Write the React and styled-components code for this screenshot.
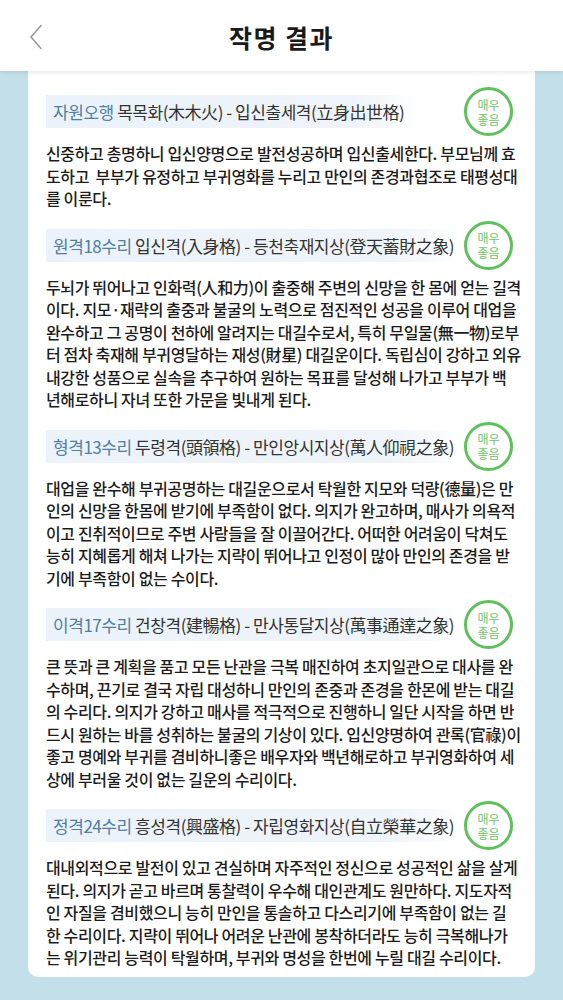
import React from 'react'
import styled, { createGlobalStyle } from 'styled-components'

const GlobalStyle = createGlobalStyle`
  html, body {
    margin: 0;
    padding: 0;
    background: #c3dfea;
  }
  body {
    font-family: 'Noto Sans CJK KR', 'Noto Sans', sans-serif;
  }
`

const sections = [
  {
    label: '자원오행',
    title: '목목화(木木火) - 입신출세격(立身出世格)',
    lines: [
      '신중하고 총명하니 입신양명으로 발전성공하며 입신출세한다. 부모님께 효',
      '도하고  부부가 유정하고 부귀영화를 누리고 만인의 존경과협조로 태평성대',
      '를 이룬다.',
    ],
  },
  {
    label: '원격18수리',
    title: '입신격(入身格) - 등천축재지상(登天蓄財之象)',
    lines: [
      '두뇌가 뛰어나고 인화력(人和力)이 출중해 주변의 신망을 한 몸에 얻는 길격',
      '이다. 지모·재략의 출중과 불굴의 노력으로 점진적인 성공을 이루어 대업을',
      '완수하고 그 공명이 천하에 알려지는 대길수로서, 특히 무일물(無一物)로부',
      '터 점차 축재해 부귀영달하는 재성(財星) 대길운이다. 독립심이 강하고 외유',
      '내강한 성품으로 실속을 추구하여 원하는 목표를 달성해 나가고 부부가 백',
      '년해로하니 자녀 또한 가문을 빛내게 된다.',
    ],
  },
  {
    label: '형격13수리',
    title: '두령격(頭領格) - 만인앙시지상(萬人仰視之象)',
    lines: [
      '대업을 완수해 부귀공명하는 대길운으로서 탁월한 지모와 덕량(德量)은 만',
      '인의 신망을 한몸에 받기에 부족함이 없다. 의지가 완고하며, 매사가 의욕적',
      '이고 진취적이므로 주변 사람들을 잘 이끌어간다. 어떠한 어려움이 닥쳐도',
      '능히 지혜롭게 해쳐 나가는 지략이 뛰어나고 인정이 많아 만인의 존경을 받',
      '기에 부족함이 없는 수이다.',
    ],
  },
  {
    label: '이격17수리',
    title: '건창격(建暢格) - 만사통달지상(萬事通達之象)',
    lines: [
      '큰 뜻과 큰 계획을 품고 모든 난관을 극복 매진하여 초지일관으로 대사를 완',
      '수하며, 끈기로 결국 자립 대성하니 만인의 존중과 존경을 한몬에 받는 대길',
      '의 수리다. 의지가 강하고 매사를 적극적으로 진행하니 일단 시작을 하면 반',
      '드시 원하는 바를 성취하는 불굴의 기상이 있다. 입신양명하여 관록(官祿)이',
      '좋고 명예와 부귀를 겸비하니좋은 배우자와 백년해로하고 부귀영화하여 세',
      '상에 부러울 것이 없는 길운의 수리이다.',
    ],
  },
  {
    label: '정격24수리',
    title: '흥성격(興盛格) - 자립영화지상(自立榮華之象)',
    lines: [
      '대내외적으로 발전이 있고 견실하며 자주적인 정신으로 성공적인 삶을 살게',
      '된다. 의지가 곧고 바르며 통찰력이 우수해 대인관계도 원만하다. 지도자적',
      '인 자질을 겸비했으니 능히 만인을 통솔하고 다스리기에 부족함이 없는 길',
      '한 수리이다. 지략이 뛰어나 어려운 난관에 봉착하더라도 능히 극복해나가',
      '는 위기관리 능력이 탁월하며, 부귀와 명성을 한번에 누릴 대길 수리이다.',
    ],
  },
]

export default function App() {
  return (
    <>
      <GlobalStyle />
      <Page>
        <Header>
          <BackButton aria-label="뒤로">
            <svg width="14" height="26" viewBox="0 0 14 26">
              <polyline
                points="12,1.5 2,13 12,24.5"
                fill="none"
                stroke="#9a9a9a"
                strokeWidth="1.6"
                strokeLinejoin="round"
                strokeLinecap="round"
              />
            </svg>
          </BackButton>
          <HeaderTitle>작명 결과</HeaderTitle>
        </Header>
        <Card>
          {sections.map((s) => (
            <Section key={s.label}>
              <TitleRow>
                <Title>
                  <Label>{s.label}</Label> {s.title}
                </Title>
                <Badge>
                  <BadgeText>매우</BadgeText>
                  <BadgeText>좋음</BadgeText>
                </Badge>
              </TitleRow>
              <Body>
                {s.lines.map((line, i) => (
                  <Line key={i}>{line}</Line>
                ))}
              </Body>
            </Section>
          ))}
        </Card>
      </Page>
    </>
  )
}

const Page = styled.div`
  min-height: 1000px;
  background: #c3dfea;
`

const Header = styled.header`
  position: relative;
  z-index: 2;
  height: 71px;
  background: #fff;
  display: flex;
  align-items: center;
  justify-content: center;
  box-shadow: 0 2px 4px rgba(0, 0, 0, 0.08);
`

const BackButton = styled.button`
  position: absolute;
  left: 29px;
  top: 24px;
  border: none;
  background: none;
  padding: 0;
  display: flex;
`

const HeaderTitle = styled.h1`
  margin: 0;
  font-size: 25px;
  font-weight: 700;
  color: #1a1a1a;
  letter-spacing: 1.5px;
  padding-top: 2px;
`

const Card = styled.main`
  margin: 0 28px;
  background: #fff;
  border-radius: 0 0 10px 10px;
  padding: 24px 18px 8px 18px;
  display: flex;
  flex-direction: column;
  gap: 19px;
`

const Section = styled.section`
  display: flex;
  flex-direction: column;
`

const TitleRow = styled.div`
  display: flex;
  align-items: center;
  height: 33px;
`

const Title = styled.h2`
  margin: 0;
  flex: 0 1 auto;
  min-width: 0;
  font-size: 17px;
  font-weight: 400;
  color: #333;
  letter-spacing: -0.45px;
  line-height: 33px;
  height: 33px;
  padding: 0 18px 0 7px;
  white-space: nowrap;
  background: linear-gradient(
    90deg,
    #ebf2f9 0%,
    #eef4f9 82%,
    rgba(238, 244, 249, 0) 100%
  );
`

const Label = styled.span`
  color: #4f7fa2;
`

const Badge = styled.div`
  flex: 0 0 auto;
  box-sizing: border-box;
  width: 49px;
  height: 49px;
  margin: -8px 4px -8px auto;
  border: 3px solid #5ec15b;
  border-radius: 50%;
  background: #fff;
  display: flex;
  flex-direction: column;
  align-items: center;
  justify-content: center;
`

const BadgeText = styled.span`
  display: block;
  font-size: 12px;
  line-height: 15px;
  color: #6cc56a;
`

const Body = styled.div`
  margin-top: 14px;
  font-size: 16px;
  font-weight: 500;
  line-height: 22.5px;
  letter-spacing: -0.35px;
  color: #1c1c1c;
`

const Line = styled.div`
  white-space: pre;
`
